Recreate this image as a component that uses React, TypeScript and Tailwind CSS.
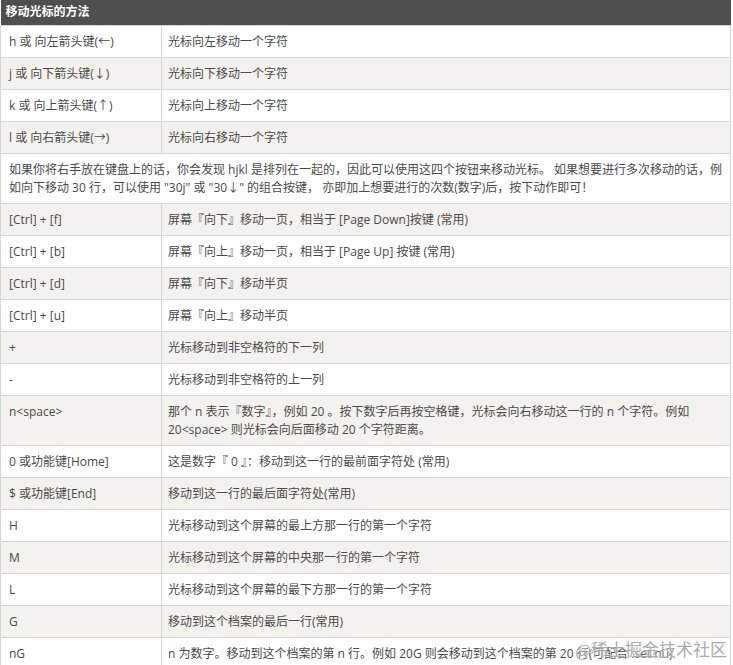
const rows: [string, string][] = [
  ['h 或 向左箭头键(←)', '光标向左移动一个字符'],
  ['j 或 向下箭头键(↓)', '光标向下移动一个字符'],
  ['k 或 向上箭头键(↑)', '光标向上移动一个字符'],
  ['l 或 向右箭头键(→)', '光标向右移动一个字符'],
];

const moreRows: [string, string][] = [
  ['[Ctrl] + [f]', '屏幕『向下』移动一页，相当于 [Page Down]按键 (常用)'],
  ['[Ctrl] + [b]', '屏幕『向上』移动一页，相当于 [Page Up] 按键 (常用)'],
  ['[Ctrl] + [d]', '屏幕『向下』移动半页'],
  ['[Ctrl] + [u]', '屏幕『向上』移动半页'],
  ['+', '光标移动到非空格符的下一列'],
  ['-', '光标移动到非空格符的上一列'],
  [
    'n<space>',
    '那个 n 表示『数字』，例如 20 。按下数字后再按空格键，光标会向右移动这一行的 n 个字符。例如 20<space> 则光标会向后面移动 20 个字符距离。',
  ],
  ['0 或功能键[Home]', '这是数字『 0 』：移动到这一行的最前面字符处 (常用)'],
  ['$ 或功能键[End]', '移动到这一行的最后面字符处(常用)'],
  ['H', '光标移动到这个屏幕的最上方那一行的第一个字符'],
  ['M', '光标移动到这个屏幕的中央那一行的第一个字符'],
  ['L', '光标移动到这个屏幕的最下方那一行的第一个字符'],
  ['G', '移动到这个档案的最后一行(常用)'],
  ['nG', 'n 为数字。移动到这个档案的第 n 行。例如 20G 则会移动到这个档案的第 20 行(可配合 :set nu)'],
];

const cell = 'border border-[#d6d6d6] pt-[7px] pb-[6px] align-top';

export default function App() {
  return (
    <div className="relative h-[665px] overflow-hidden bg-white font-['Open_Sans','Noto_Sans_CJK_SC',sans-serif] text-[12px] leading-[18px] text-[#4a4a4a]">
      <table className="w-[731px] border-collapse table-fixed">
        <colgroup>
          <col className="w-[161px]" />
          <col />
        </colgroup>
        <thead>
          <tr>
            <th
              colSpan={2}
              className="h-[25px] bg-[#4f4f4f] px-[5px] text-left font-bold text-white"
            >
              移动光标的方法
            </th>
          </tr>
        </thead>
        <tbody className="[&>tr:nth-child(even)]:bg-[#f3f2ee]">
          {rows.map(([key, desc]) => (
            <tr key={key}>
              <td className={`${cell} pl-[8px] pr-2`}>{key}</td>
              <td className={`${cell} pl-[6px] pr-2`}>{desc}</td>
            </tr>
          ))}
          <tr>
            <td colSpan={2} className={`${cell} pl-[8px] pr-[1px]`}>
              如果你将右手放在键盘上的话，你会发现 hjkl 是排列在一起的，因此可以使用这四个按钮来移动光标。 如果想要进行多次移动的话，例如向下移动 30 行，可以使用 "30j" 或 "30↓" 的组合按键， 亦即加上想要进行的次数(数字)后，按下动作即可！
            </td>
          </tr>
          {moreRows.map(([key, desc]) => (
            <tr key={key}>
              <td className={`${cell} pl-[8px] pr-2`}>{key}</td>
              <td className={`${cell} pl-[6px] pr-2`}>{desc}</td>
            </tr>
          ))}
        </tbody>
      </table>

      {/* site watermark */}
      <div className="pointer-events-none absolute right-[6px] bottom-[4px] font-['Liberation_Serif','Noto_Sans_CJK_SC',serif] text-[17px] leading-[20px] text-[#ababab] [text-shadow:0_0_2px_#fff]">
        @稀土掘金技术社区
      </div>
    </div>
  );
}
